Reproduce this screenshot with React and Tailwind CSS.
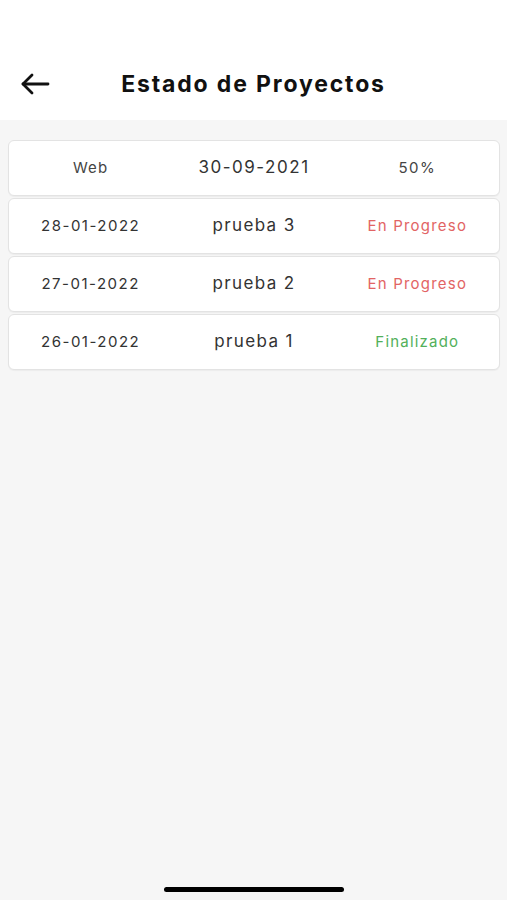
const rows = [
  { left: "28-01-2022", mid: "prueba 3", right: "En Progreso", color: "text-[#e26464]" },
  { left: "27-01-2022", mid: "prueba 2", right: "En Progreso", color: "text-[#e26464]" },
  { left: "26-01-2022", mid: "prueba 1", right: "Finalizado", color: "text-[#52b05a]" },
];

function BackArrow() {
  return (
    <svg width="30" height="22" viewBox="0 0 30 22" fill="none">
      <path d="M28 11H3" stroke="#111" strokeWidth="2.8" strokeLinecap="round" />
      <path d="M12 2L3 11L12 20" stroke="#111" strokeWidth="2.8" strokeLinecap="round" strokeLinejoin="round" />
    </svg>
  );
}

export default function App() {
  return (
    <div className="h-[900px] flex flex-col bg-[#f6f6f6] font-['Inter',sans-serif] text-[#333]">
      <header className="h-[120px] bg-white flex items-center pt-[48px] px-5">
        <button className="w-[30px] flex items-center">
          <BackArrow />
        </button>
        <h1 className="flex-1 text-center text-[23px] font-bold tracking-[0.08em] text-[#111]">
          Estado de Proyectos
        </h1>
        <div className="w-[30px]" />
      </header>

      <main className="flex-1 flex flex-col pl-2 pr-[7px] pt-5">
        <div className="flex flex-col gap-[2px]">
          <div className="h-[56px] grid grid-cols-3 items-center bg-white border border-[#e3e3e3] rounded-md shadow-[0_1px_1px_rgba(0,0,0,0.04)] text-center">
            <span className="text-[15px] tracking-[0.08em] text-[#444]">Web</span>
            <span className="text-[17px] tracking-[0.09em]">30-09-2021</span>
            <span className="text-[15px] tracking-[0.1em] text-[#444]">50%</span>
          </div>
          {rows.map((r) => (
            <div
              key={r.mid}
              className="h-[56px] grid grid-cols-3 items-center bg-white border border-[#e3e3e3] rounded-md shadow-[0_1px_1px_rgba(0,0,0,0.04)] text-center"
            >
              <span className="text-[15px] tracking-[0.1em]">{r.left}</span>
              <span className="text-[17px] tracking-[0.08em]">{r.mid}</span>
              <span className={`text-[15px] tracking-[0.08em] ${r.color}`}>{r.right}</span>
            </div>
          ))}
        </div>

        <div className="mt-auto mb-[8px] self-center w-[180px] h-[5px] rounded-full bg-black" />
      </main>
    </div>
  );
}
